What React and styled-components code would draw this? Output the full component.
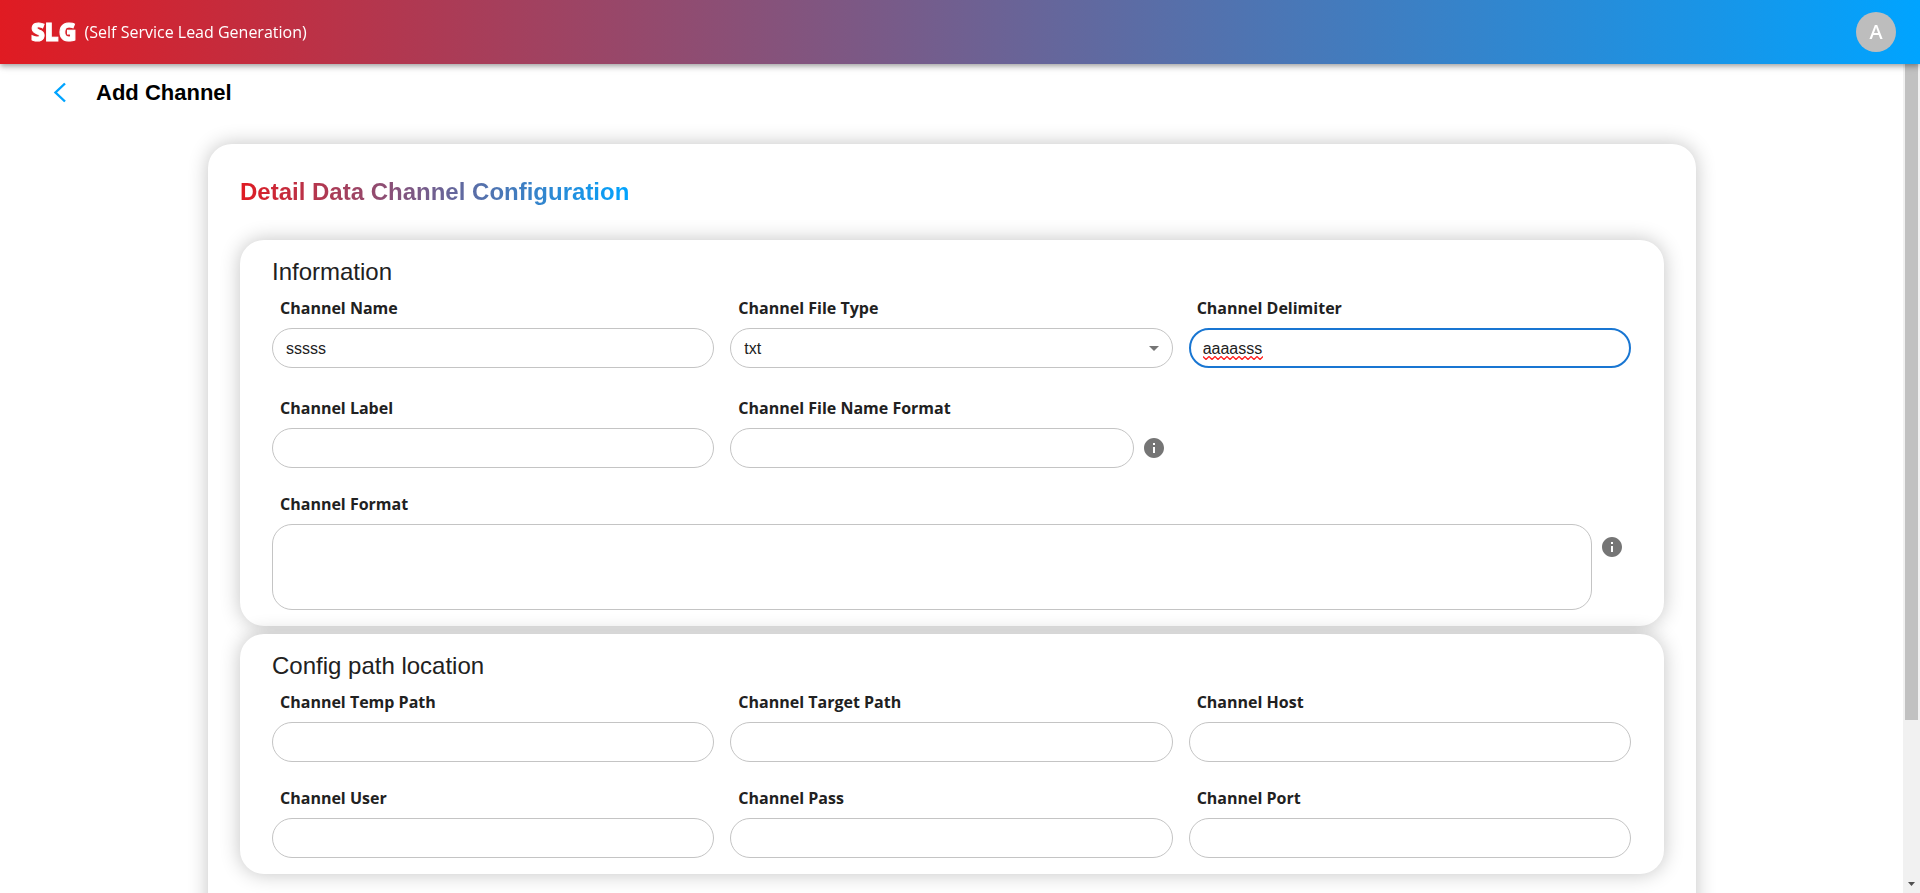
import React from "react";
import styled, { createGlobalStyle } from "styled-components";

const brandGradient = "linear-gradient(90deg, #e01b22 0%, #00a4ff 100%)";
const arial = '"Liberation Sans", Arial, sans-serif';
const openSans = '"Open Sans", sans-serif';

const GlobalStyle = createGlobalStyle`
  *, *::before, *::after { box-sizing: border-box; }
  body { margin: 0; background: #fff; color: #212121; font: 16px/24px ${arial}; }
  h1, h2, h3, p { margin: 0; }
`;

const Header = styled.header`
  position: fixed;
  inset: 0 0 auto;
  z-index: 2;
  height: 64px;
  padding: 0 24px 0 31px;
  display: flex;
  align-items: center;
  gap: 8px;
  background: ${brandGradient};
  box-shadow: 0 2px 4px -1px rgba(0, 0, 0, 0.2), 0 4px 5px rgba(0, 0, 0, 0.14), 0 1px 10px rgba(0, 0, 0, 0.12);
  color: #fff;
  font-family: ${openSans};
`;

const Logo = styled.span`
  font-size: 24px;
  font-weight: 800;
  -webkit-text-stroke: 1px currentColor;
`;

const Tagline = styled.span`
  flex: 1;
`;

const Avatar = styled.button`
  width: 40px;
  height: 40px;
  padding: 0;
  border: 0;
  border-radius: 50%;
  background: #bdbdbd;
  color: #fff;
  font: 500 20px/40px "Noto Sans", sans-serif;
`;

const Viewport = styled.div`
  display: flex;
  height: 100vh;
`;

const Scroller = styled.div`
  flex: 1;
  min-width: 0;
  overflow-y: auto;
  scrollbar-width: none;
`;

const ScrollTrack = styled.div`
  width: 17px;
  padding: 17px 2px 0;
  display: flex;
  flex-direction: column;
  justify-content: space-between;
  align-items: center;
  background: #f1f1f1;
`;

const ScrollThumb = styled.div`
  width: 100%;
  height: 80.3%;
  background: #c1c1c1;
`;

const ScrollArrow = styled.svg`
  display: block;
  width: 17px;
  height: 17px;
`;

const PageBar = styled.div`
  margin-top: 64px;
  height: 56px;
  padding: 2px 0 0 48px;
  display: flex;
  align-items: center;
  gap: 24px;
`;

const BackButton = styled.button`
  width: 24px;
  height: 24px;
  padding: 0;
  border: 0;
  background: none;
  color: #00a4ff;

  svg { display: block; }
`;

const PageTitle = styled.h1`
  color: #000;
  font-size: 22px;
  line-height: 24px;
  font-weight: 700;
`;

const Card = styled.section`
  border-radius: 24px;
  background: #fff;
  box-shadow: 0 0 20px rgba(0, 0, 0, 0.24);
`;

const MainCard = styled(Card)`
  margin: 24px 207px 32px 208px;
  padding: 32px 32px 184px;
`;

const CardTitle = styled.h2`
  width: fit-content;
  margin-bottom: 32px;
  background: ${brandGradient};
  background-clip: text;
  color: transparent;
  font-size: 24px;
  line-height: 32px;
`;

const Section = styled(Card)`
  padding: 16px 33px 16px 32px;

  & + & { margin-top: 8px; }
`;

const SectionTitle = styled.h3`
  margin-bottom: 8px;
  font-size: 24px;
  line-height: 32px;
  font-weight: 400;
`;

const Grid = styled.div`
  display: grid;
  grid-template-columns: repeat(3, 1fr);
  gap: 24px 16px;
`;

const FieldBox = styled.div`
  grid-column: ${(p) => (p.$wide ? "1 / -1" : "auto")};
  padding-bottom: ${(p) => (p.$spaced ? "4px" : "0")};
`;

const Label = styled.label`
  display: block;
  width: fit-content;
  margin: 0 8px 8px;
  font: 700 16px/24px ${openSans};
`;

const ControlRow = styled.div`
  display: flex;
  align-items: ${(p) => (p.$wide ? "flex-start" : "center")};
  position: relative;
`;

const Input = styled.input`
  flex: 1;
  min-width: 0;
  width: 100%;
  height: 40px;
  padding: ${(p) => (p.$active ? "2px 12px 0" : "2px 13px 0")};
  border: ${(p) => (p.$active ? "2px solid #1976d2" : "1px solid #c4c4c4")};
  border-radius: 20px;
  outline: 0;
  background: #fff;
  color: #212121;
  font: 16px/24px ${arial};
`;

const Select = styled(Input).attrs({ as: "select" })`
  appearance: none;
`;

const TextArea = styled(Input).attrs({ as: "textarea" })`
  display: block;
  height: 86px;
  padding: 8px 13px;
  resize: none;
`;

const SelectArrow = styled.svg`
  position: absolute;
  right: 7px;
  top: 8px;
  pointer-events: none;
`;

const SpellingMark = styled.svg`
  position: absolute;
  left: 14px;
  top: 28px;
  pointer-events: none;
`;

const InfoButton = styled.button`
  width: 24px;
  height: 24px;
  margin: ${(p) => (p.$wide ? "11px 7px 0 8px" : "0 7px 0 8px")};
  padding: 0;
  border: 0;
  background: none;
  color: #757575;

  svg { display: block; }
`;

function Info({ wide }) {
  return (
    <InfoButton type="button" aria-label="More information" $wide={wide}>
      <svg width="24" height="24" viewBox="0 0 24 24" fill="currentColor">
        <path d="M12 2C6.480 2 2 6.480 2 12s4.480 10 10 10 10-4.480 10-10S17.520 2 12 2zm1 15h-2v-6h2v6zm0-8h-2V7h2v2z" />
      </svg>
    </InfoButton>
  );
}

function Field({ id, label, value, kind = "input", active, info, spaced }) {
  const wide = kind === "textarea";
  return (
    <FieldBox $wide={wide} $spaced={spaced}>
      <Label htmlFor={id}>{label}</Label>
      <ControlRow $wide={wide}>
        {kind === "input" && <Input id={id} defaultValue={value} $active={active} spellCheck={false} />}
        {kind === "textarea" && <TextArea id={id} />}
        {kind === "select" && (
          <>
            <Select id={id} defaultValue={value}>
              <option>{value}</option>
            </Select>
            <SelectArrow width="24" height="24" viewBox="0 0 24 24" fill="#757575">
              <path d="M7 10l5 5 5-5z" />
            </SelectArrow>
          </>
        )}
        {active && (
          <SpellingMark width="60" height="4" viewBox="0 0 60 4" fill="none" stroke="#ff2020" strokeWidth="1.300">
            <path d="M0 .5l3 3 3-3 3 3 3-3 3 3 3-3 3 3 3-3 3 3 3-3 3 3 3-3 3 3 3-3 3 3 3-3 3 3 3-3 3 3 3-3" />
          </SpellingMark>
        )}
        {info && <Info wide={wide} />}
      </ControlRow>
    </FieldBox>
  );
}

export default function App() {
  return (
    <>
      <GlobalStyle />
      <Header>
        <Logo>SLG</Logo>
        <Tagline>(Self Service Lead Generation)</Tagline>
        <Avatar type="button">A</Avatar>
      </Header>
      <Viewport>
        <Scroller>
          <PageBar>
            <BackButton type="button" aria-label="Back">
              <svg width="24" height="24" viewBox="0 0 24 24" fill="none" stroke="currentColor" strokeWidth="2.400">
                <path d="M17 2.500L7.500 11.500l9.500 9" />
              </svg>
            </BackButton>
            <PageTitle>Add Channel</PageTitle>
          </PageBar>
          <MainCard as="main">
            <CardTitle>Detail Data Channel Configuration</CardTitle>
            <Section>
              <SectionTitle>Information</SectionTitle>
              <Grid>
                <Field id="name" label="Channel Name" value="sssss" spaced />
                <Field id="type" label="Channel File Type" value="txt" kind="select" />
                <Field id="delimiter" label="Channel Delimiter" value="aaaasss" active />
                <Field id="label" label="Channel Label" />
                <Field id="filename" label="Channel File Name Format" info />
                <Field id="format" label="Channel Format" kind="textarea" info />
              </Grid>
            </Section>
            <Section>
              <SectionTitle>Config path location</SectionTitle>
              <Grid>
                <Field id="temp" label="Channel Temp Path" />
                <Field id="target" label="Channel Target Path" />
                <Field id="host" label="Channel Host" />
                <Field id="user" label="Channel User" />
                <Field id="pass" label="Channel Pass" />
                <Field id="port" label="Channel Port" />
              </Grid>
            </Section>
          </MainCard>
        </Scroller>
        <ScrollTrack aria-hidden="true">
          <ScrollThumb />
          <ScrollArrow viewBox="0 0 17 17">
            <path d="M5 6h7l-3.500 4z" fill="#505050" />
          </ScrollArrow>
        </ScrollTrack>
      </Viewport>
    </>
  );
}
